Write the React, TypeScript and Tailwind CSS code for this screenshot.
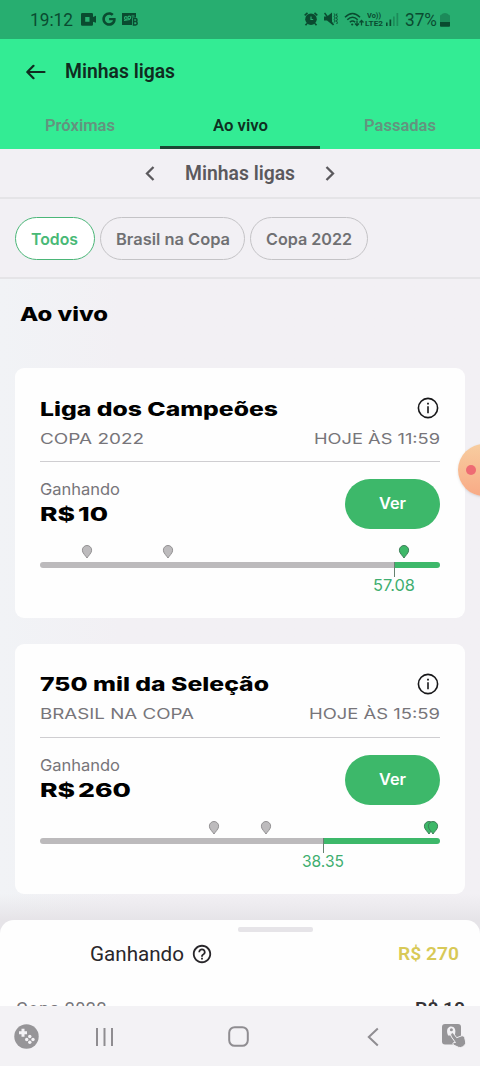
import { useLayoutEffect, useRef, useState } from 'react';
import type { ReactNode } from 'react';
import { FaGoogle } from 'react-icons/fa';
import { MdHelpOutline } from 'react-icons/md';

/** A single line of text stretched horizontally to fill the width of its box. */
function Fit({ className, children }: { className: string; children: ReactNode }) {
  const box = useRef<HTMLSpanElement>(null);
  const text = useRef<HTMLSpanElement>(null);
  const [scale, setScale] = useState(1);
  useLayoutEffect(() => {
    if (box.current && text.current) {
      setScale(box.current.clientWidth / text.current.getBoundingClientRect().width);
    }
  }, []);
  return (
    <span ref={box} className={`block shrink-0 whitespace-nowrap ${className}`}>
      <span ref={text} className="inline-block origin-left" style={{ transform: `scaleX(${scale})` }}>
        {children}
      </span>
    </span>
  );
}

function StatusBar() {
  return (
    <div className="flex h-[39px] items-center bg-[#27ae70] pl-[30px] text-[#0a4b30]">
      <Fit className="w-[43px] text-[18px] leading-[36px]">19:12</Fit>
      <svg className="-mt-[1px] ml-[8px]" width="16" height="13" viewBox="0 0 16 13" fill="currentColor">
        <path fillRule="evenodd" d="M1.2 0h9.6q1.2 0 1.2 1.2V4l3-1.200v7L12 8.800v2.800q0 1.200-1.200 1.200H1.2Q0 12.800 0 11.600V1.200Q0 0 1.200 0ZM4.200 4v4.800h4.300V4Z" />
      </svg>
      <FaGoogle className="-mt-[1px] ml-[5px]" size={14} />
      <svg className="-mt-[1px] ml-[6px]" width="17" height="14" viewBox="0 0 17 14">
        <path d="M0 1h14v12H0Z" fill="currentColor" />
        <g fill="none" stroke="#27ae70" strokeWidth="1.100">
          <circle cx="3.800" cy="6" r="1.400" />
          <circle cx="7.300" cy="5.500" r="1.400" />
          <path d="M9.500 4h3M2 8.500l6-1" />
        </g>
        <path d="M10 5.500h6V14h-6Z" fill="#27ae70" />
        <path d="M11.500 6.500V13h2q1.700 0 1.700-1.700 0-1.500-1.500-1.700 1.300-.2 1.300-1.500 0-1.600-1.500-1.600ZM11.500 9.600h2" fill="none" stroke="currentColor" strokeWidth="1.500" />
      </svg>
      <svg className="-mt-[1px] ml-auto" width="14" height="14" viewBox="0 0 14 14">
        <circle cx="7" cy="7.200" r="5.800" fill="currentColor" />
        <path d="M.7 3.400 3.500.9M13.300 3.400 10.500.9M3 11.500l-1.500 1.800M11 11.500l1.500 1.800" stroke="currentColor" strokeWidth="1.600" />
        <path d="M7 4.500v3l2.200 0" fill="none" stroke="#27ae70" strokeWidth="1.200" />
      </svg>
      <svg className="-mt-[1px] ml-[6px]" width="14" height="14" viewBox="0 0 14 14">
        <path d="M0 4.500h3L8 .5v12l-5-4H0Z" fill="currentColor" />
        <path d="m.5 1 9 12" stroke="currentColor" strokeWidth="1.500" />
        <path d="m10.200 1.500 1 1.500-1 1.500 1 1.500-1 1.500 1 1.500-1 1.500M13 1.500 12.500 3l.8 1.500-.8 1.500.8 1.500-.8 1.500.8 1.500-.5 1.500" fill="none" stroke="currentColor" strokeWidth="1" />
      </svg>
      <svg className="-mt-[1px] ml-[6px]" width="20" height="15" viewBox="0 0 20 15" fill="none" stroke="currentColor">
        <path d="M1 5.300Q8.500-2.300 16 5.300M3.300 7.800q5.200-5 10.400 0M5.800 10.200q2.700-2.400 5.400 0" strokeWidth="1.500" />
        <circle cx="8.200" cy="12.500" r="1.100" fill="currentColor" stroke="none" />
        <path d="M13 8.500v5m-2-2 2 2 2-2M17.500 13.500V8.700m-2 1.800 2-2 2 2" strokeWidth="1.300" />
      </svg>
      <span className="ml-[1px] flex w-[18px] flex-col items-center text-[8px] leading-[8px] font-bold">
        <Fit className="w-[14px]">Vo))</Fit>
        <Fit className="w-[18px]">LTE2</Fit>
      </span>
      <svg className="ml-[3px]" width="13" height="13" viewBox="0 0 13 13" fill="currentColor">
        <path d="M0 9.500h1.600V13H0ZM3.500 6.500h1.700V13H3.500Z" />
        <path opacity=".35" d="M7 3.500h1.700V13H7ZM10.500 0h1.700v13h-1.700Z" />
      </svg>
      <Fit className="ml-[6px] w-[32px] text-[18px] leading-[36px]">37%</Fit>
      <svg className="mr-[30px] ml-[3px]" width="10" height="14" viewBox="0 0 9 14" preserveAspectRatio="none">
        <path opacity=".35" fill="currentColor" d="M0 3q0-1.200 1.500-1.500Q2 0 4.500 0T7.500 1.500Q9 1.800 9 3v7H0Z" />
        <path fill="currentColor" d="M0 9h9v4q0 .8-.8.8H.8Q0 13.800 0 13Z" />
      </svg>
    </div>
  );
}

function Header() {
  return (
    <header className="h-[110px] bg-[#33ec94]">
      <div className="flex h-[64px] items-center pl-[26px] text-[#102b20]">
        <svg className="mt-[1px]" width="20" height="16" viewBox="0 0 20 16" fill="none" stroke="currentColor" strokeWidth="2.200" strokeLinecap="round" strokeLinejoin="round">
          <path d="M18.500 8H1.500M7.500 1.800 1.300 8l6.200 6.200" />
        </svg>
        <Fit className="mt-[2px] ml-[19px] w-[110px] text-[19.500px] font-semibold">Minhas ligas</Fit>
      </div>
      <nav className="grid h-[46px] grid-cols-3 text-[16px] font-semibold text-[#64937f]">
        <div className="flex justify-center pt-[11px] pr-px">
          <Fit className="w-[70px]">Próximas</Fit>
        </div>
        <div className="flex justify-center border-b-[3px] border-[#1b4834] pt-[11px] text-[#0e3022]">
          <Fit className="w-[55px]">Ao vivo</Fit>
        </div>
        <div className="flex justify-center pt-[11px] pr-px">
          <Fit className="w-[72px]">Passadas</Fit>
        </div>
      </nav>
    </header>
  );
}

function LeaguePicker() {
  return (
    <div className="flex h-[50px] items-center justify-center border-b-2 border-[#e5e4e7] text-[#5b595d]">
      <svg width="10" height="15" viewBox="0 0 10 15" fill="none" stroke="currentColor" strokeWidth="2.300">
        <path d="M8.500 1 2 7.500 8.500 14" />
      </svg>
      <Fit className="mx-[30px] mt-[2px] w-[110px] text-[19.500px] font-semibold">Minhas ligas</Fit>
      <svg width="10" height="15" viewBox="0 0 10 15" fill="none" stroke="currentColor" strokeWidth="2.300">
        <path d="M1.500 1 8 7.500 1.500 14" />
      </svg>
    </div>
  );
}

function Filters() {
  return (
    <div className="flex h-[80px] items-center gap-[5px] border-b-2 border-[#e5e4e7] pl-[15px] font-['Inter',sans-serif] text-[16px] font-semibold text-[#707073]">
      <div className="flex h-[43px] w-[80px] items-center justify-center rounded-full border-[1.500px] border-[#4bb678] bg-white text-[#48b976]">
        <Fit className="mt-px mr-px w-[47px]">Todos</Fit>
      </div>
      <div className="flex h-[43px] w-[145px] items-center justify-center rounded-full border-[1.500px] border-[#c4c3c6]">
        <Fit className="mt-px w-[114px]">Brasil na Copa</Fit>
      </div>
      <div className="flex h-[43px] w-[118px] items-center justify-center rounded-full border-[1.500px] border-[#c4c3c6]">
        <Fit className="mt-px w-[86px]">Copa 2022</Fit>
      </div>
    </div>
  );
}

function Pin({ at, green }: { at: number; green?: boolean }) {
  return (
    <svg className="absolute -top-[17px] -translate-x-1/2" style={{ left: at }} width="11" height="14" viewBox="0 0 11 14">
      <path
        d="M5.500 13C4.600 11.300.8 8 .8 5.200a4.700 4.700 0 0 1 9.400 0C10.200 8 6.400 11.300 5.500 13Z"
        fill={green ? '#3db868' : '#bdbbbd'}
        stroke={green ? '#3d7e58' : '#929092'}
      />
    </svg>
  );
}

interface LeagueCardProps {
  title: ReactNode;
  cup: ReactNode;
  time: ReactNode;
  prize: ReactNode;
  score: string;
  cut: number;
  greyPins: number[];
  greenPins: number[];
}

function LeagueCard({ title, cup, time, prize, score, cut, greyPins, greenPins }: LeagueCardProps) {
  return (
    <article className="h-[250px] rounded-[9px] bg-[#fefefe] px-[25px] pt-[29px] font-['Inter',sans-serif]">
      <div className="flex h-[23px] items-start justify-between text-[19px] leading-[24px] font-extrabold text-black">
        <div className="pt-[0.5px]">{title}</div>
        <svg className="mr-[1px]" width="22" height="22" viewBox="0 0 22 22" fill="none" stroke="#171719">
          <circle cx="11" cy="11" r="9.600" strokeWidth="1.600" />
          <path d="M11 9.300v7" strokeWidth="1.600" />
          <path d="M11 5.700v1.800" strokeWidth="1.800" />
        </svg>
      </div>
      <div className="mt-[8px] flex h-[20px] items-center justify-between text-[14px] text-[#77757a]">
        {cup}
        {time}
      </div>
      <div className="mt-[13px] h-px bg-[#cfced1]" />
      <div className="mt-[17px] flex h-[50px] justify-between">
        <div>
          <Fit className="h-[20px] w-[80px] text-[16px] leading-[20px] text-[#77757a]">Ganhando</Fit>
          <div className="pt-[1px] text-[19px] leading-[30px] font-extrabold [word-spacing:-2px] text-black">{prize}</div>
        </div>
        <button className="flex h-[50px] w-[95px] items-center justify-center rounded-full bg-[#3db86a] text-[16px] font-semibold text-white">
          <Fit className="mr-[1px] mb-[2px] w-[27px]">Ver</Fit>
        </button>
      </div>
      <div className="relative mt-[33px] h-[6px]">
        <div className="flex h-full overflow-hidden rounded-full">
          <div className="bg-[#bcbabc]" style={{ width: cut }} />
          <div className="flex-1 bg-[#3db86a]" />
        </div>
        {greyPins.map((x) => (
          <Pin key={x} at={x} />
        ))}
        {greenPins.map((x) => (
          <Pin key={x} at={x} green />
        ))}
        <div className="absolute top-0 h-[15px] w-px bg-[#65816f]" style={{ left: cut }} />
        <div className="absolute top-[13px] -translate-x-1/2 text-[16px] leading-[20px] text-[#3fae70]" style={{ left: cut }}>
          <Fit className="w-[42px]">{score}</Fit>
        </div>
      </div>
    </article>
  );
}

function SummarySheet() {
  return (
    <section className="relative h-[86px] shrink-0 overflow-hidden rounded-t-[14px] bg-[#fefefe]">
      <div className="mx-auto h-[5px] w-[75px] translate-x-[35px] translate-y-[7px] rounded-[2px] bg-[#e6e4e8]" />
      <div className="mt-[13px] flex h-[32px] items-center pr-[21px] pl-[90px]">
        <Fit className="w-[94px] text-[20px] text-[#29272b]">Ganhando</Fit>
        <MdHelpOutline className="ml-[7px]" size={22} color="#29272b" />
        <Fit className="ml-auto w-[61px] text-[19px] font-semibold text-[#d8c957]">R$ 270</Fit>
      </div>
      <div className="mt-[26px] flex justify-between pr-[15px] pl-[16px]">
        <Fit className="w-[91px] text-[17.500px] tracking-[0.5px] text-[#77757a]">Copa 2022</Fit>
        <Fit className="w-[50px] text-[17.500px] font-semibold text-[#363438]">R$ 10</Fit>
      </div>
    </section>
  );
}

function SystemNav() {
  return (
    <nav className="flex h-[60px] shrink-0 items-center bg-[#f3f2f5] pl-[14px]">
      <svg width="25" height="25" viewBox="0 0 25 25">
        <circle cx="12.500" cy="12.500" r="12.200" fill="#969598" />
        <path d="M9 4.700v8M5 8.700h8" stroke="#f3f2f5" strokeWidth="3" />
        <g fill="#f3f2f5">
          <circle cx="15.800" cy="12.500" r="1.700" />
          <circle cx="19" cy="15.500" r="1.700" />
          <circle cx="15.800" cy="18.300" r="1.700" />
          <circle cx="12.700" cy="15.500" r="1.700" />
        </g>
      </svg>
      <svg className="mt-[2px] ml-[56px]" width="19" height="20" viewBox="0 0 19 20">
        <path d="M2 1v18M9.500 1v18M17 1v18" stroke="#8f8d91" strokeWidth="2" />
      </svg>
      <svg className="mt-px ml-[114px]" width="21" height="21" viewBox="0 0 21 21">
        <rect x="1.200" y="1.200" width="18.600" height="18.600" rx="5.500" fill="none" stroke="#8f8d91" strokeWidth="2" />
      </svg>
      <svg className="mt-[2px] ml-[118px]" width="12" height="20" viewBox="0 0 12 20">
        <path d="M10.800 1.500 1.800 10l9 8.500" fill="none" stroke="#8f8d91" strokeWidth="2" />
      </svg>
      <svg className="-mt-[2px] ml-[63px]" width="24" height="25" viewBox="0 0 24 25">
        <rect x="0" y="1" width="19" height="20.500" rx="3" fill="#969598" />
        <path d="M6 12.500C3.500 6 6.500 3.500 9.300 3.500s5.500 3 3.200 9" fill="#f3f2f5" />
        <circle cx="9.400" cy="6.800" r="1.500" fill="#969598" />
        <path
          d="M9 10.200q1.500-1.200 2.700.5l3 4 5.300-2q2-.2 2.600 1.700l1.100 4.600q.3 2-1.200 3.300l-1.800 1.500q-2 1.200-4.200.5l-5-2.300q-1.200-1-.2-2.300l2.200-.2-4-5.500q-1.500-2.300-.5-3.800Z"
          fill="#969598"
          stroke="#f3f2f5"
          strokeWidth="1"
        />
      </svg>
    </nav>
  );
}

export default function App() {
  return (
    <div className="relative flex h-[1066px] w-[480px] flex-col overflow-hidden bg-[#f2f0f4] font-['Roboto',sans-serif]">
      <StatusBar />
      <Header />
      <LeaguePicker />
      <Filters />
      <main className="h-[641px] shrink-0 bg-linear-to-r from-[#f1f3f6] to-[#f2f0f4] to-25% px-[15px]">
        <h1 className="flex h-[89px] items-start pt-[22px] pl-[5px] font-['Inter',sans-serif] text-[19px] font-extrabold text-black">
          <Fit className="w-[88px]">Ao vivo</Fit>
        </h1>
        <div className="flex flex-col gap-[25.5px]">
          <LeagueCard
            title={<Fit className="w-[238px]">Liga dos Campeões</Fit>}
            cup={<Fit className="w-[104px]">COPA 2022</Fit>}
            time={<Fit className="w-[126px]">HOJE ÀS 11:59</Fit>}
            prize={<Fit className="w-[68px]">R$ 10</Fit>}
            score="57.08"
            cut={353.5}
            greyPins={[47, 128]}
            greenPins={[363.5]}
          />
          <LeagueCard
            title={<Fit className="w-[229px]">750 mil da Seleção</Fit>}
            cup={<Fit className="w-[154px]">BRASIL NA COPA</Fit>}
            time={<Fit className="w-[131px]">HOJE ÀS 15:59</Fit>}
            prize={<Fit className="w-[91px]">R$ 260</Fit>}
            score="38.35"
            cut={283}
            greyPins={[174, 225.5]}
            greenPins={[389, 393]}
          />
        </div>
        <div className="-mx-[15px] h-[26.5px] bg-linear-to-b from-transparent to-[#e6e4e8]" />
      </main>
      <div className="shrink-0 bg-[#e6e4e8]">
        <SummarySheet />
      </div>
      <SystemNav />
      <div className="absolute top-[444px] left-[458px] flex size-[52px] items-center rounded-full bg-linear-to-b from-[#f7cda0] to-[#f8aa86] pl-[8px] shadow-sm">
        <span className="size-[10px] rounded-full bg-[#ee6b73]" />
      </div>
    </div>
  );
}
